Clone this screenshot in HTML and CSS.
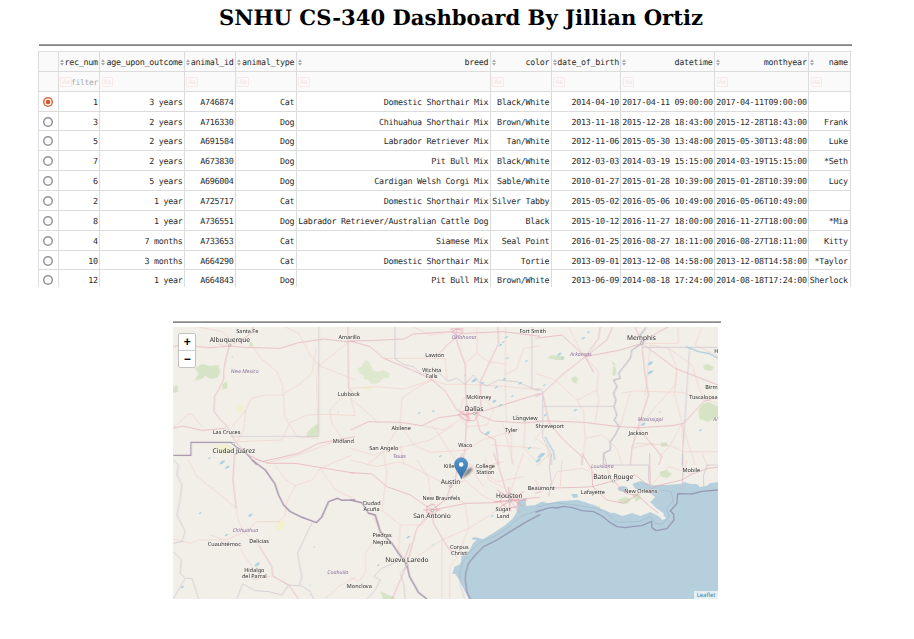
FILE: index.html
```html
<!DOCTYPE html>
<html lang="en">
<head>
<meta charset="utf-8">
<title>SNHU CS-340 Dashboard</title>
<link rel="stylesheet" href="styles.css">
</head>
<body>
<h1>SNHU CS-340 Dashboard By Jillian Ortiz</h1>
<div class="rule"></div>
<div class="table-wrap"><div class="grid" id="grid"></div></div>
<div class="map-section">
<div class="rule rule-map"></div>
<div class="map">
<svg class="tiles" viewBox="172.7 327 545 272.2" preserveAspectRatio="none">
<rect x="172" y="327" width="546" height="273" fill="#f2efe9"/>
<!-- gulf -->
<path fill="#b5d0dc" d="M469 600L464 590 459 580 455 574 456 568 461 562 461 556 468 552 473 543 478 538 483 539 493 533 505 525 512 519 518 510 519 502 524 500 526 506 535 505 545 500 549 503 560 501 578 500 590 504 600 507 612 512 622 516 632 513 640 516 650 512 660 517 664 514 656 508 650 502 655 497 648 492 640 490 647 486 655 485 665 485 680 484 684 482 690 484 696 484 700 487 706 486 710 483 718 482V600Z"/>
<g fill="#b5d0dc">
<path d="M617 488q6-4 11 0l-3 4-6-1zM580 503l5-1 2 4-5 1zM571 494l6 0 1 3-5 1zM632 484l8-3 9 3 3 4-8 3-9-2z"/>
<path d="M452 574l2-7 4-2 1 9zM475 540l-4-1 3-2 5 1zM516 513l2-12 8-3-1 9z"/>
</g>
<g fill="#f2efe9"><path d="M648 506l10 5 8 7-4 2-6-7-10-4zM602 505l14 7-5 1-12-5zM540 501l12-3 7 2-12 3z"/></g>
<!-- woodland and parks -->
<g fill="#cfe2bc" opacity=".8">
<path d="M195 368l7-4 8 2 8-1 2 7-3 6-7 1-5-3-4 3-7 2 4-7zM222 384l5-3 0 7-5 2zM173 387l4-2 1 7-5 1zM250 341l3 3-1 3-3-1z"/>
<path opacity=".75" d="M357 368l4-1 4-7 4 2 3 8 6 2 5-2 7 4-2 4-5 0-5 5-7 1-3-4-5-1 1-4-4-1z"/>
<path d="M571 378l4-2 3 3-2 5-4-2zM613 366l3 2-1 8-3-1zM611 360l3 3 2 4-3-2zM547 358l4-3 12 1 1 4-8 0zM703 365l4-1 7 3-3 4-7-1z"/>
<path d="M698 410l4-6 6-2 10 4v10l-10 6-9-3zM380 591l6 3 8 3 1 3h-12zM307 432l9-8 2 1v12h-12zM660 443l6-1 2 4-7 1zM617 500l8-3 6 2-4 5-7-1zM632 495l6-3 3 6-5 4zM659 472l7-2 6 4-5 4-6-1z"/>
</g>
<g fill="#f3efbf" opacity=".65"><path d="M213 447l13-3 7 4-4 7-9-1zM237 407l4-3 2 6-6 3zM275 526l5-6 5 2-2 7-8 2zM366 386l5 1-2 4-4-1zM597 505l4-1 2 3-6 0z"/></g>
<g class="roads">
<g transform="translate(165 315) scale(.3333)">
<path class="mw" d="M24 95L50 88 100 95 135 98 195 93 240 97 345 100 400 83 475 72 545 80 570 78M192 93L181 135 175 170 176 190 160 225 148 243 146 290 165 313 185 334 205 370 215 385M205 86L240 68 262 50 263 36M24 340L52 333 110 346 180 340M215 385L250 420 290 440 400 415 460 385 530 372 570 365M548 36L549 150 550 220 565 235"/>
<path class="rd" d="M263 95L287 130 335 170 350 205 355 240 357 300 370 325 425 300 490 298 570 302M360 36L400 55 435 120 462 152 550 80M357 235L400 210 440 175 453 100M462 152L570 195M357 240L300 240 258 250 242 285 235 345 215 380M215 380L350 375 372 328 395 365 460 370M24 340L70 296 80 298 113 338M242 285L200 335M550 225L493 285 500 325 530 370M550 225L570 300M460 140L454 185 455 220 459 350M300 445L400 420 530 372M100 36L170 50 205 80M195 95L155 86"/>
<path class="bd" d="M461 36V364H195"/>
<path class="nb thin" d="M24 421H77V382H198L212 395 240 412 275 450"/>
</g>
<g transform="translate(350 315) scale(.3333)">
<path class="mw" d="M0 78L75 76 160 72 190 57 300 50 340 55 460 50 570 64M0 345L55 320 150 322 215 332 265 308 325 300 375 295 430 318 520 324 570 320M245 195L285 228 320 285 350 300M322 40L315 65 345 150 346 230 350 280 345 400 335 450M375 295L392 270 390 200 445 85 443 36M245 193L185 165 100 130 60 95 0 78M375 295L410 285 570 235M252 132L290 90 318 68M375 295L390 350 435 375 445 450"/>
<path class="rd" d="M0 220L80 215 160 222 245 195 286 208 345 208 450 213 570 225M0 250L60 300 85 325M245 193L190 225 155 250 150 325M150 325L190 390 240 412 350 405M150 325L100 410 50 450M100 130L285 130 290 195M345 144L380 115 415 140 466 148M380 115V36M466 36L465 200 468 320M0 400L70 420 100 410 240 375 310 330M348 405L395 375 500 345M420 390L570 400M460 330L490 450M570 92L520 100 500 160 465 180M525 322L520 400 570 450M190 36L240 60 305 50M245 330L280 380 325 450M350 300L280 345 215 332M325 300L340 250 400 245 430 285 410 330 350 335 325 300M482 335L485 450M150 390L160 450"/>
<path class="ci" d="M325 300L345 285 372 282 385 300 370 318 345 315ZM330 290L360 310M352 270L355 320M340 300L385 292M305 50L322 40 338 50 325 64ZM300 42H340"/>
<path class="st" d="M134 36V132L160 148 190 155 215 178 250 168 275 180 292 198 320 190 345 208 370 180 385 200 410 212 445 195 500 200 550 222 570 222M545 36V220"/>
</g>
<g transform="translate(535 315) scale(.3333)">
<path class="mw" d="M0 70L80 60 150 125 255 105 320 85 420 160 548 210M0 245L22 235 80 180 150 125 215 75 232 36M0 318L45 318 145 322 250 335 310 338 410 332 445 325 505 260 548 245M300 36L320 85 328 170 340 240 308 338 290 400 285 450M310 340L380 425 370 450M22 235L40 320 80 370 140 425 140 450M150 125L190 70 195 36M320 85L370 50 400 36M150 125L175 172"/>
<path class="rd" d="M0 175L60 195 125 255 185 225 190 170 150 125M100 36L145 125M125 255L145 290 150 370 140 450M45 320L0 370M255 235L300 228 440 232 548 265M255 335L275 265 285 235M330 240L345 90M345 90L400 100 425 160 418 240 440 320 445 450M320 85L430 85 428 36M310 338L370 265 420 210 425 160M150 370L200 360 245 400 260 450M300 385L400 390 445 410 548 410M290 400L350 385 380 425M180 322L190 255 185 225M440 325L405 390 370 430M0 370L35 395 45 450M440 325L480 450M505 260L470 150 400 100M500 36L480 90 548 125"/>
<path class="st" d="M22 228V365L45 410 50 450M22 274H235M320 97H548M463 97L440 450M0 225H22"/>
<path class="riv" d="M332 38L315 60 320 85 290 105 285 130 265 155 250 175 255 190 235 195 245 215 235 235 242 255 236 275 245 300 237 315 252 335 240 360 225 380 225 405 205 415 205 450"/>
<path class="st blue" d="M30 365L40 385 55 410 58 435M452 95L490 110 520 115 548 130"/>
</g>
<g transform="translate(165 460) scale(.3333)">
<path class="mw" d="M270 -4L310 10 390 10 480 25 570 40M208 -20L203 60 213 145M280 255L320 320 322 348 370 375 400 417"/>
<path class="rd" d="M70 0L95 50 160 100 213 145 218 180 237 217 280 255M237 217L275 185 340 185 360 165 365 125 390 77 440 60 465 25 560 -15M465 25L510 90 570 118M330 15L360 60 390 77M24 238L75 250 100 240 180 240 237 217M225 250L232 280 260 320 265 360 320 348M480 417L520 380 570 352M322 348L370 375M135 225L180 240"/>
<path class="nb" d="M260 0L300 30 328 70 340 105 355 135 375 155 410 172 453 188 470 170 490 125 517 115 530 121 570 120"/>
<path class="st" d="M24 0L40 15 35 45 50 75 45 115 35 165 60 215 50 245 24 250M24 275L48 300 45 340 60 355 80 355 95 400 100 417M60 355L24 417M215 417L232 372 270 392 310 395 350 405 370 375 410 378 435 395 445 417M440 190L420 230 397 280 410 350 403 375"/>
</g>
<g transform="translate(350 460) scale(.3333)">
<path class="mw" d="M0 38L65 42 110 80 180 105 245 150 350 130 440 128 478 120 570 112M335 -20L315 55 300 80 290 115 245 150 200 205 170 310M245 150L250 190 270 225 298 270 320 292M430 -20L445 20 465 85 478 120M478 120L510 160M170 315L125 417M160 305L180 250"/>
<path class="rd" d="M0 352L25 365 45 340 45 280 90 215 60 150M100 -20L110 40 95 150 150 195 215 195 245 150M330 0L395 30 440 65 520 50M300 80L345 60 395 105 440 128M245 150L300 110 345 130 355 205 420 165 478 120M355 205L275 240 170 310M355 205L325 280M0 0L80 20 150 5 215 35 300 80M200 0L235 55 245 150M275 240V417M298 320V417M298 320L320 292M150 195L145 270 170 310M315 40L380 25 460 5M405 -10L415 60 465 85M520 -20L500 35 475 115M365 30L400 80"/>
<path class="ci" d="M460 105L485 100 505 120 500 140 470 145 450 125ZM440 90L520 140M430 125L530 120M445 145L520 95M475 80L480 155M230 140L250 132 262 150 248 165 230 158ZM220 150H270"/>
<path class="nb" d="M0 120L35 128 55 160 75 165 90 215 125 250 145 280 170 315 178 350 205 398 230 417"/>
<path class="st" d="M170 315L150 340 160 370 165 417M150 300L95 325 70 350 90 360 75 390 50 417"/>
<path class="sea" d="M570 163L520 190 480 215 440 240 400 260 375 285 355 310 347 335 345 360 350 395 360 417"/>
<path class="sea thin" d="M570 148L510 170 470 205 430 230 385 250 355 278 335 310 328 345 332 380 343 417"/>
</g>
<g transform="translate(535 460) scale(.3333)">
<path class="mw" d="M0 80L45 84 140 82 172 80 235 62 270 100 300 105 375 75 440 60 470 42 520 25 548 22M235 62L300 45 340 78M343 -20L345 78M172 80L215 120 265 130 305 105 345 140 370 160M140 -20L170 30 172 80M0 100L17 95"/>
<path class="rd" d="M0 20L45 -20M45 84L65 35 140 25 235 62M75 80L80 0M230 62L210 10M345 78L400 20 470 42M440 60L455 0M520 25L500 -20M0 60L20 95"/>
<path class="st" d="M50 -20L42 20 48 65 40 110M205 -20L215 15H340V60L350 85M442 -20V90M505 85V45L515 15H548"/>
<path class="sea" d="M0 157L35 145 50 142 65 144 85 139 110 143 140 152 175 155 200 168 225 188 245 200 270 203 290 200 320 197 349 184 350 203 362 212 395 206 416 180 415 162 405 153 425 130 427 101 470 102 500 94 548 90"/>
<path class="sea thin" d="M0 142L60 128 120 135 180 145 210 155 245 187 310 185 345 170 360 190 380 193 402 170 392 145 414 125 408 95 375 90"/>
</g>
</g>
<g class="lakes" id="lakes"></g>
<g class="cityring"><circle cx="229.5" cy="345" r="1.2"/><circle cx="233" cy="443.5" r="1.2"/><circle cx="474" cy="413.5" r="1.2"/><circle cx="641.5" cy="343" r="1.2"/><circle cx="432" cy="510.5" r="1.2"/><circle cx="450.5" cy="486" r="1.2"/><circle cx="509.5" cy="501" r="1.2"/><circle cx="613" cy="481" r="1.2"/><circle cx="406.5" cy="565" r="1.2"/></g>
<g class="big">
<text x="229.5" y="342.1">Albuquerque</text><text x="233.5" y="452.8">Ciudad Juárez</text><text x="473.8" y="411.2">Dallas</text><text x="641.2" y="340.3">Memphis</text><text x="450.3" y="483.8">Austin</text><text x="509" y="498.3">Houston</text><text x="431.7" y="518.5">San Antonio</text><text x="406.7" y="562.5">Nuevo Laredo</text><text x="613" y="478.7">Baton Rouge</text>
</g>
<g class="small">
<text x="247" y="332.6">Santa Fe</text><text x="349" y="338.9">Amarillo</text><text x="348.5" y="396.1">Lubbock</text><text x="343" y="442.6">Midland</text><text x="226.2" y="433.6">Las Cruces</text><text x="434.5" y="357.1">Lawton</text><text x="431.5" y="371.6">Wichita</text><text x="431.5" y="378.3">Falls</text><text x="532.5" y="333.2">Fort Smith</text><text x="478.5" y="399.1">McKinney</text><text x="525" y="419.6">Longview</text><text x="511" y="432.5">Tyler</text><text x="549.5" y="427.6">Shreveport</text><text x="400.8" y="429.8">Abilene</text><text x="383.5" y="449.9">San Angelo</text><text x="465" y="447.4">Waco</text><text x="452" y="467.9">Killeen</text><text x="485" y="467.7">College</text><text x="485" y="474.3">Station</text><text x="441" y="500.5">New Braunfels</text><text x="502.8" y="511.5">Sugar</text><text x="502.8" y="518">Land</text><text x="541" y="489.7">Beaumont</text><text x="592.5" y="494.2">Lafayette</text><text x="640.5" y="492.7">New Orleans</text><text x="691" y="472.2">Mobile</text><text x="638" y="434.6">Jackson</text><text x="703" y="398.6">Tuscaloosa</text><text class="edge" x="717.4" y="389.4">Birm</text><text class="edge" x="718" y="353.2">H</text><text x="371.2" y="504.8">Ciudad</text><text x="371.2" y="511.3">Acuña</text><text x="381.7" y="537.4">Piedras</text><text x="381.7" y="543.9">Negras</text><text x="459" y="549">Corpus</text><text x="459" y="555.4">Christi</text><text x="224" y="546">Cuauhtémoc</text><text x="258.8" y="543.4">Delicias</text><text x="254" y="572">Hidalgo</text><text x="254" y="578.5">del Parral</text><text x="359" y="587.7">Monclova</text>
</g>
<g class="state"><text x="244.5" y="373">New Mexico</text><text x="463.5" y="339.4">Oklahoma</text><text x="580.5" y="356.2">Arkansas</text><text x="650" y="421.2">Mississippi</text><text x="399" y="458">Texas</text><text x="602" y="468.5">Louisiana</text><text x="245" y="532.5">Chihuahua</text><text x="337.5" y="574.2">Coahuila</text><text class="edge" x="717.3" y="420.6">Al</text></g>
<defs><linearGradient id="pin" x2="0" y2="1"><stop stop-color="#5798cf"/><stop offset="1" stop-color="#2d6ca7"/></linearGradient><filter id="soft"><feGaussianBlur stdDeviation=".8"/></filter></defs>
<path d="M461 479L465 472Q471 465 472 469 472 473 461 479Z" opacity=".45" filter="url(#soft)"/>
<path d="M461 478.8C459.5 474 454.2 469 454.2 464.3A6.6 6.6 0 0 1 467.4 464.3C467.4 469 462.5 474 461 478.8Z" fill="url(#pin)" stroke="#2e6ea8" stroke-width=".5"/>
<circle cx="460.9" cy="464.5" r="2.2" fill="#fff"/>
</svg>
<div class="zoom"><button class="zoom-btn">+</button><button class="zoom-btn">−</button></div>
<a class="credit">Leaflet</a>
</div>
</div>
<script src="main.js"></script>
</body>
</html>
```
FILE: styles.css
```css
* { box-sizing: border-box; }
body { margin: 0; width: 914px; height: 639px; overflow: hidden; background: #fff; text-rendering: geometricPrecision; }
h1 {
  margin: 0 0 0 8px; height: 44px; padding-top: 4px; text-align: center;
  font: bold 21.15px/28px "DejaVu Serif", serif; color: #000;
}
.rule { height: 2px; margin: 0 62px 0 38.5px; background: linear-gradient(#aaa, #777); }
.table-wrap { height: 236px; margin: 5px 0 0 38px; width: 813.5px; overflow: hidden; }
.grid {
  display: grid;
  grid-template-columns: 20.9px 41.3px 84.7px 51px 60.7px 194.1px 61px 69.7px 93.7px 94px 42px;
  grid-auto-rows: 19.87px;
  border-top: 1px solid #e0e0e0;
  font: 8.4px/19px "DejaVu Sans Mono", monospace; letter-spacing: -.29px; color: #2b2b2b;
}
.cell {
  display: flex; align-items: center; justify-content: flex-end;
  padding: 2px 1.4px 0 2px; white-space: pre;
  border-right: 1px solid #dcdcdc; border-bottom: 1px solid #dcdcdc;
}
.cell.pick { justify-content: center; padding: 1px 0 0; border-left: 1px solid #dcdcdc; }
.cell.head, .cell.filter { background: #fafafa; }
.cell.head, .cell.filter { justify-content: space-between; padding-left: 1px; }
.cell.name { padding-right: 2.2px; }
.sort { width: 4px; height: 7px; flex: none; fill: #aaa; margin-right: -1px; }
.case {
  width: 11.5px; height: 10px; margin: 0 -1px 0 .5px; border: 1px solid #fbe8e8; border-radius: 1px;
  font: 6.5px/8px "DejaVu Sans Mono", monospace; color: #f7e3e5; text-align: center; flex: none;
}
.cell.filter { color: #a8a8a8; }
.filter-hint { font-size: 8px; }
.radio { width: 10px; height: 10px; box-shadow: inset 0 0 0 1.5px #9292a0; border-radius: 50%; }
.radio.on { box-shadow: inset 0 0 0 1.5px #df6642; background: radial-gradient(circle, #d9572f 0 2px, #fff 2.6px); }
.map-section { margin: 34px 0 0 172.7px; width: 548.5px; }
.rule-map { margin: 0; background: linear-gradient(#b8b8b8, #7c7c7c); }
.map { position: relative; width: 545px; height: 272.2px; margin-top: 4px; overflow: hidden; }
.tiles { display: block; width: 545px; height: 272.2px; }
.roads path { fill: none; stroke-linejoin: round; }
.roads .mw { stroke: #e5a7b7; stroke-width: 2.5; opacity: .8; }
.roads .rd { stroke: #f2c0b7; stroke-width: 1.8; opacity: .75; }
.roads .st { stroke: #cdc4cf; stroke-width: 2.2; }
.roads .bd { stroke: #cfc9cf; stroke-width: 2.2; }
.roads .nb { stroke: #a896ad; stroke-width: 4.5; }
.roads .nb.thin { stroke-width: 3.5; }
.roads .riv { stroke: #c0bccb; stroke-width: 4; stroke-dasharray: 7 1; }
.roads .ci { stroke: #e9a5b5; stroke-width: 2.5; }
.roads .blue { stroke: #a9cede; stroke-width: 3.5; }
.roads .sea { stroke: #938fb0; stroke-width: 4; opacity: .85; }
.roads .sea.thin { stroke-width: 1.5; opacity: .55; }
.lakes { fill: #a9d3e2; }
.cityring { fill: #fff; stroke: #777; stroke-width: .5; }
.tiles text { font-family: "Noto Sans", sans-serif; text-anchor: middle; }
.tiles text.edge { text-anchor: end; }
.big { font-size: 6.6px; fill: #2b2b2b; }
.small { font-size: 5.5px; fill: #2b2b2b; }
.big, .small { paint-order: stroke; stroke: #f5f2ee; stroke-width: .7px; }
.state { font-size: 5.3px; font-style: italic; fill: #8d72a0; }
.zoom {
  position: absolute; left: 5.6px; top: 6px; width: 18.2px; height: 35px;
  border: 1px solid #c5c3bf; border-radius: 2px; background: #fff; display: flex; flex-direction: column;
}
.zoom-btn {
  flex: 1; width: 100%; padding: 0; border: 0; background: none; color: #000;
  font: bold 12px/15px "Liberation Sans", sans-serif;
}
.zoom-btn + .zoom-btn { border-top: 1px solid #ccc; }
.credit {
  position: absolute; right: 0; bottom: 0; width: 23.3px; height: 8.5px; text-align: center;
  background: #e6eff3; color: #2c84ae; font: 5.9px/8.5px "Noto Sans", sans-serif;
}
```
FILE: main.js
```js
const columns = ["rec_num", "age_upon_outcome", "animal_id", "animal_type", "breed", "color", "date_of_birth", "datetime", "monthyear", "name"];
const rows = [
  ["1", "3 years", "A746874", "Cat", "Domestic Shorthair Mix", "Black/White", "2014-04-10", "2017-04-11 09:00:00", ""],
  ["3", "2 years", "A716330", "Dog", "Chihuahua Shorthair Mix", "Brown/White", "2013-11-18", "2015-12-28 18:43:00", "Frank"],
  ["5", "2 years", "A691584", "Dog", "Labrador Retriever Mix", "Tan/White", "2012-11-06", "2015-05-30 13:48:00", "Luke"],
  ["7", "2 years", "A673830", "Dog", "Pit Bull Mix", "Black/White", "2012-03-03", "2014-03-19 15:15:00", "*Seth"],
  ["6", "5 years", "A696004", "Dog", "Cardigan Welsh Corgi Mix", "Sable/White", "2010-01-27", "2015-01-28 10:39:00", "Lucy"],
  ["2", "1 year", "A725717", "Cat", "Domestic Shorthair Mix", "Silver Tabby", "2015-05-02", "2016-05-06 10:49:00", ""],
  ["8", "1 year", "A736551", "Dog", "Labrador Retriever/Australian Cattle Dog", "Black", "2015-10-12", "2016-11-27 18:00:00", "*Mia"],
  ["4", "7 months", "A733653", "Cat", "Siamese Mix", "Seal Point", "2016-01-25", "2016-08-27 18:11:00", "Kitty"],
  ["10", "3 months", "A664290", "Cat", "Domestic Shorthair Mix", "Tortie", "2013-09-01", "2013-12-08 14:58:00", "*Taylor"],
  ["12", "1 year", "A664843", "Dog", "Pit Bull Mix", "Brown/White", "2013-06-09", "2014-08-18 17:24:00", "Sherlock"]
];
const sort = '<svg class="sort" viewBox="0 0 4 7"><path d="M0 3L2 .3 4 3zM0 4L2 6.7 4 4z"/></svg>';
const nameClass = i => (i === 9 ? " name" : "");
let html = '<div class="cell pick head"></div>';
html += columns.map((c, i) => `<div class="cell head${nameClass(i)}">${sort}<span>${c}</span></div>`).join("");
html += '<div class="cell pick filter"></div>';
html += columns.map((c, i) => `<div class="cell filter"><span class="case">Aa</span>${i === 0 ? '<span class="filter-hint">filter</span>' : ""}</div>`).join("");
rows.forEach((row, r) => {
  // monthyear repeats datetime in ISO form
  const values = [...row.slice(0, 8), row[7].replace(" ", "T"), row[8]];
  html += `<div class="cell pick"><span class="radio${r === 0 ? " on" : ""}"></span></div>`;
  html += values.map((v, i) => `<div class="cell${nameClass(i)}">${v}</div>`).join("");
});
document.getElementById("grid").innerHTML = html;

// small lakes and reservoirs: x, y, half-length
const lakes = [[232,357,1],[338,412,1],[474,380,3],[500,345,2],[506,337,2],[503,342,1.5],[465,375,1],[482,383,2],[494,401,2.5],[500,405,2],[496,387,2],[504,379,2],[512,396,1.5],[520,383,2],[507,358,1.5],[526,361,1.5],[516,416,1.5],[487,433,3],[529,448,2],[545,415,2],[560,426,2],[544,385,1.5],[559,354,2.5],[562,358,2],[575,410,2],[650,363,3],[650,372,3],[643,424,2.5],[588,332,1.5],[583,338,2],[541,455,4],[538,460,3],[200,513,1.5],[226,535,2],[250,515,2.5],[257,564,3],[182,587,2],[222,462,3],[227,467,2.5],[209,458,1.5],[310,585,1],[314,547,1],[378,565,1.5],[310,595,1],[408,537,2],[432,545,1],[419,413,1.5],[433,411,1.5],[401,457,1],[440,456,1.5],[480,470,1.5],[492,516,1.5],[660,412,1],[700,430,1.5]];
document.getElementById("lakes").innerHTML = lakes.map(([x, y, s]) =>
  `<path d="M${x - s} ${y + s * .5}l${s} ${-s}h${s}l${-s * .5} ${s * .8}l${-s} ${s * .5}z"/>`).join("");
```
